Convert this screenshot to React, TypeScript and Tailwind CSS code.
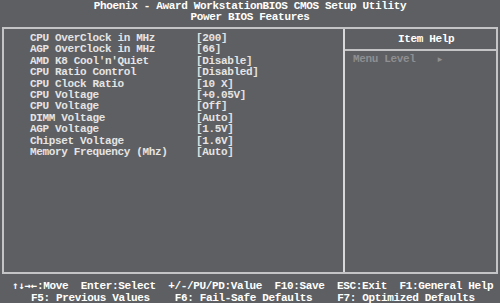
import React from 'react';

const items: [string, string][] = [
  ['CPU OverClock in MHz', '[200]'],
  ['AGP OverClock in MHz', '[66]'],
  ["AMD K8 Cool'n'Quiet", '[Disable]'],
  ['CPU Ratio Control', '[Disabled]'],
  ['CPU Clock Ratio', '[10 X]'],
  ['CPU Voltage', '[+0.05V]'],
  ['CPU Voltage', '[Off]'],
  ['DIMM Voltage', '[Auto]'],
  ['AGP Voltage', '[1.5V]'],
  ['Chipset Voltage', '[1.6V]'],
  ['Memory Frequency (Mhz)', '[Auto]'],
];

export default function App() {
  return (
    <div className="w-[500px] h-[303px] bg-[#5e5f62] text-[#e4e4e4] font-bold overflow-hidden font-['Liberation_Mono','DejaVu_Sans_Mono',monospace] text-[11px] tracking-[-0.35px]">
      <div className="h-[27px] pt-[1px] flex flex-col items-center leading-[11px] text-white">
        <div className="whitespace-pre">Phoenix - Award WorkstationBIOS CMOS Setup Utility</div>
        <div className="whitespace-pre">Power BIOS Features</div>
      </div>

      <div className="ml-[2px] w-[496px] h-[247px] border-2 border-[#c4c4c6] flex">
        <div className="w-[341px] border-r-2 border-[#d8d8da] pt-[4px] pl-[26px] leading-[11.4px]">
          {items.map(([label, value], i) => (
            <div key={i} className="flex whitespace-pre">
              <div className="w-[166px]">{label}</div>
              <div>{value}</div>
            </div>
          ))}
        </div>
        <div className="flex-1 flex flex-col">
          <div className="h-[22px] border-b-2 border-[#c4c4c6] flex items-center pl-[53px] text-white">
            Item Help
          </div>
          <div className="pt-[3px] pl-[8px] flex items-center text-[#8e8f92] whitespace-pre leading-[11px]">
            <span>Menu Level</span>
            <span className="ml-[22px] text-[8px]">►</span>
          </div>
        </div>
      </div>

      <div className="mt-[5px] leading-[12px] text-white whitespace-pre">
        <div className="pl-[12px]">
          <span className="font-['DejaVu_Sans_Mono',monospace] text-[10.4px] tracking-[0px]">↑↓→←</span>:Move  Enter:Select  +/-/PU/PD:Value  F10:Save  ESC:Exit  F1:General Help
        </div>
        <div className="pl-[31px]">F5: Previous Values    F6: Fail-Safe Defaults    F7: Optimized Defaults</div>
      </div>
    </div>
  );
}
